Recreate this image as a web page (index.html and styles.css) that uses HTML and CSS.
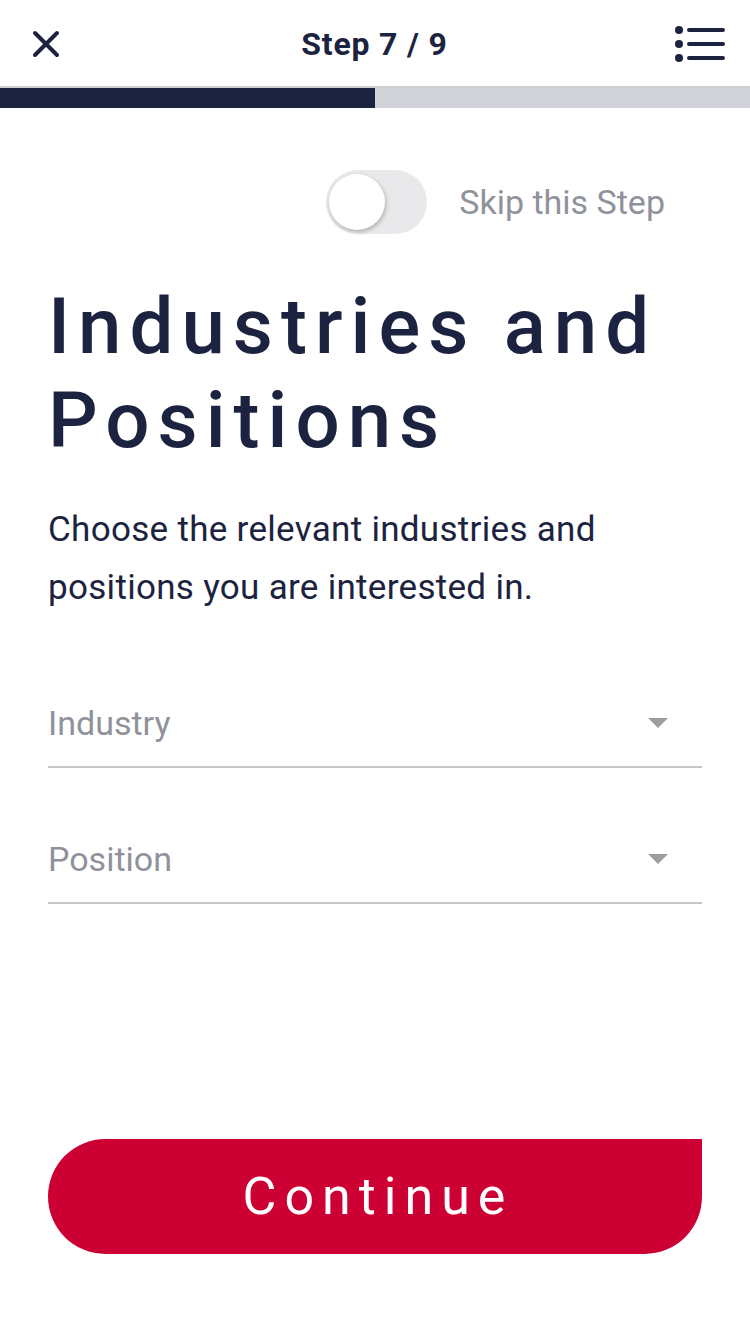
FILE: index.html
```html
<!DOCTYPE html>
<html>
<head>
<meta charset="utf-8">
<link rel="stylesheet" href="styles.css">
</head>
<body>
<div class="page">
  <header class="topbar">
    <button class="icon-btn close" aria-label="Close">
      <svg width="30" height="30" viewBox="0 0 30 30"><path d="M4 4 L26 26 M26 4 L4 26" stroke="#1c2340" stroke-width="4" stroke-linecap="round"/></svg>
    </button>
    <div class="step">Step 7 / 9</div>
    <button class="icon-btn menu" aria-label="Menu">
      <svg width="52" height="36" viewBox="0 0 52 36"><circle cx="5" cy="4" r="4" fill="#1c2340"/><circle cx="5" cy="18" r="4" fill="#1c2340"/><circle cx="5" cy="32" r="4" fill="#1c2340"/><path d="M15 4 H49 M15 18 H49 M15 32 H49" stroke="#1c2340" stroke-width="4" stroke-linecap="round"/></svg>
    </button>
  </header>
  <div class="progress"><div class="progress-fill"></div></div>

  <main class="content">
    <div class="skip-row">
      <div class="toggle"><div class="knob"></div></div>
      <span class="skip-label">Skip this Step</span>
    </div>
    <h1 class="title">Industries and Positions</h1>
    <p class="desc">Choose the relevant industries and positions you are interested in.</p>

    <div class="field">
      <span class="placeholder">Industry</span>
      <span class="caret"></span>
    </div>
    <div class="field">
      <span class="placeholder">Position</span>
      <span class="caret"></span>
    </div>

    <div class="spacer"></div>
    <button class="continue">Continue</button>
  </main>
</div>
</body>
</html>
```
FILE: styles.css
```css
* { box-sizing: border-box; }
html, body { margin: 0; padding: 0; background: #fff; }
body { font-family: Roboto, "Noto Sans", sans-serif; color: #1c2340; }
.page { width: 750px; height: 1334px; display: flex; flex-direction: column; }

.topbar {
  height: 88px;
  display: flex;
  align-items: center;
  justify-content: space-between;
  padding: 0 24px 0 31px;
  border-bottom: 2px solid #cfcfd1;
}
.icon-btn { background: none; border: 0; padding: 0; display: flex; }
.close { margin-top: 2px; }
.menu { margin-top: 2px; }
.step { font-size: 32px; font-weight: 700; letter-spacing: 0.8px; margin-left: 14px; margin-top: 2px; }

.progress { height: 20px; background: #d1d2d7; }
.progress-fill { width: 375px; height: 100%; background: #1c2340; }

.content { flex: 1; display: flex; flex-direction: column; padding: 0 48px 80px 48px; }

.skip-row {
  display: flex;
  align-items: center;
  justify-content: flex-end;
  margin-top: 62px;
  padding-right: 37px;
  gap: 32px;
}
.toggle {
  width: 101px; height: 64px; border-radius: 32px;
  background: #e9e9eb;
  position: relative;
}
.knob {
  position: absolute; left: 3px; top: 4px;
  width: 56px; height: 56px; border-radius: 50%;
  background: #fff;
  box-shadow: 1px 2px 4px rgba(0,0,0,0.25);
}
.skip-label { font-size: 34px; color: #8f929b; }

.title {
  margin: 46px 0 0 0;
  font-size: 78px;
  line-height: 94px;
  font-weight: 500;
  letter-spacing: 8px;
  color: #1c2340;
}
.desc {
  margin: 33px 0 0 0;
  font-size: 35px;
  line-height: 58px;
  letter-spacing: 0.3px;
  color: #1c2340;
  width: 600px;
}

.field {
  height: 94px;
  display: flex;
  align-items: center;
  justify-content: space-between;
  border-bottom: 2px solid #c8c8cc;
  padding-right: 34px;
  margin-top: 57px;
}
.field + .field { margin-top: 42px; }
.placeholder { font-size: 34px; color: #8f929b; margin-top: 6px; }
.caret {
  width: 0; height: 0;
  border-left: 10px solid transparent;
  border-right: 10px solid transparent;
  border-top: 10px solid #9e9e9e;
  margin-top: 6px;
}

.spacer { flex: 1; }
.continue {
  height: 115px;
  width: 654px;
  border: 0;
  background: #cc0033;
  color: #fff;
  border-radius: 58px 0 58px 58px;
  font-family: Roboto, sans-serif;
  font-size: 52px;
  font-weight: 400;
  letter-spacing: 8px;
  padding: 0 0 0 6px;
}
```
